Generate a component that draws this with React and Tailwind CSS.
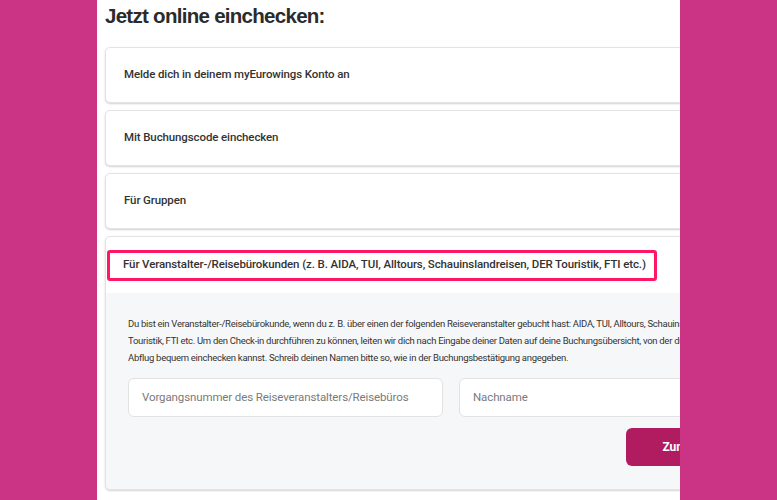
export default function App() {
  const body = "font-['Roboto','Liberation_Sans',sans-serif]";
  return (
    <div className={`w-[777px] h-[500px] overflow-hidden flex bg-[#cb3385] ${body}`}>
      <div className="w-[97px] shrink-0" />
      <div className="w-[583px] shrink-0 h-full bg-white overflow-hidden pl-[8px]">
        <div className="w-[692px]">
          <h1 className="font-['Liberation_Sans',Arial,sans-serif] font-bold text-[20.5px] leading-[24px] tracking-[-0.035em] text-[#2b2b2b] pt-[4px] h-[47px]">
            Jetzt online einchecken:
          </h1>
          <div className="flex flex-col gap-[7px]">
            {["Melde dich in deinem myEurowings Konto an", "Mit Buchungscode einchecken", "Für Gruppen"].map((t) => (
              <div
                key={t}
                className="h-[56px] flex items-center px-[18px] bg-white border border-[#e3e3e3] rounded-[5px] shadow-[0_1px_2px_rgba(0,0,0,0.18)] text-[11.5px] tracking-[-0.01em] font-medium text-[#333]"
              >
                {t}
              </div>
            ))}
            <div className="bg-white border border-[#e3e3e3] rounded-[5px] shadow-[0_1px_2px_rgba(0,0,0,0.18)] overflow-hidden">
              <div className="h-[56px] flex items-center pl-[1px]">
                <div className="border-[3px] border-[#fe1762] rounded-[3px] h-[31px] flex items-center pl-[13px] pr-[8px] text-[11.5px] tracking-[-0.01em] font-medium text-[#333]">
                  Für Veranstalter-/Reisebürokunden (z. B. AIDA, TUI, Alltours, Schauinslandreisen, DER Touristik, FTI etc.)
                </div>
              </div>
              <div className="bg-[#f6f7f9] h-[196px] px-[22px] pt-[22px]">
                <div className="text-[9.5px] leading-[17px] tracking-[-0.03em] text-[#333] whitespace-nowrap">
                  <div>Du bist ein Veranstalter-/Reisebürokunde, wenn du z. B. über einen der folgenden Reiseveranstalter gebucht hast: AIDA, TUI, Alltours, Schauinslandreisen, DER</div>
                  <div>Touristik, FTI etc. Um den Check-in durchführen zu können, leiten wir dich nach Eingabe deiner Daten auf deine Buchungsübersicht, von der du bis zu 30 Stunden vor</div>
                  <div>Abflug bequem einchecken kannst. Schreib deinen Namen bitte so, wie in der Buchungsbestätigung angegeben.</div>
                </div>
                <div className="flex gap-[16px] mt-[12px]">
                  <div className="w-[315px] h-[39px] bg-white border border-[#e2e2e2] rounded-[6px] flex items-center px-[13px] text-[11.5px] tracking-[-0.01em] text-[#7a7a7a]">
                    Vorgangsnummer des Reiseveranstalters/Reisebüros
                  </div>
                  <div className="w-[315px] h-[39px] bg-white border border-[#e2e2e2] rounded-[6px] flex items-center px-[13px] text-[11.5px] tracking-[-0.01em] text-[#7a7a7a]">
                    Nachname
                  </div>
                </div>
                <div className="flex justify-end w-[646px] mt-[11px]">
                  <button className="h-[38px] px-[36px] rounded-[6px] bg-[#b01c5f] text-white text-[12px] font-bold">
                    Zum Check-in
                  </button>
                </div>
              </div>
            </div>
          </div>
        </div>
      </div>
    </div>
  );
}
